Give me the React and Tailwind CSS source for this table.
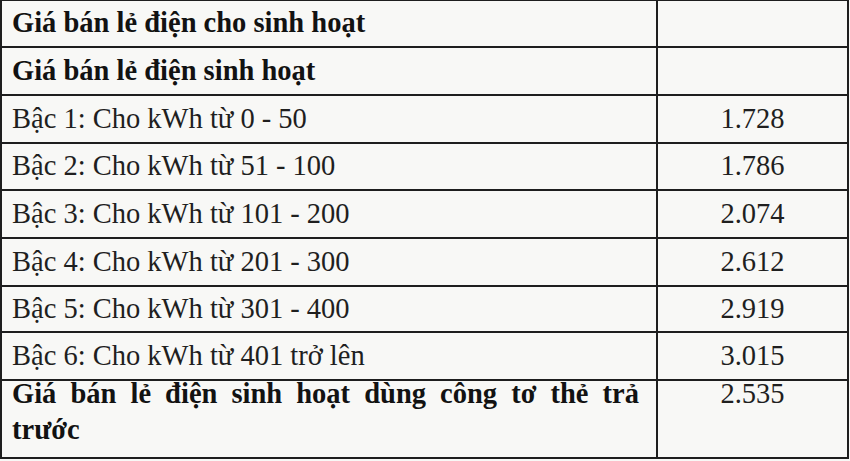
import React from 'react';

const rows = [
  { label: 'Giá bán lẻ điện cho sinh hoạt', value: '', bold: true, h: 'h-[47px]' },
  { label: 'Giá bán lẻ điện sinh hoạt', value: '', bold: true, h: 'h-[48px]' },
  { label: 'Bậc 1: Cho kWh từ 0 - 50', value: '1.728', h: 'h-[48px]' },
  { label: 'Bậc 2: Cho kWh từ 51 - 100', value: '1.786', h: 'h-[47px]' },
  { label: 'Bậc 3: Cho kWh từ 101 - 200', value: '2.074', h: 'h-[48px]' },
  { label: 'Bậc 4: Cho kWh từ 201 - 300', value: '2.612', h: 'h-[48px]' },
  { label: 'Bậc 5: Cho kWh từ 301 - 400', value: '2.919', h: 'h-[46px]' },
  { label: 'Bậc 6: Cho kWh từ 401 trở lên', value: '3.015', h: 'h-[48px]' },
];

export default function App() {
  return (
    <div className="w-[850px] h-[461px] overflow-hidden bg-[#f8f8f6] font-['Liberation_Serif','Times_New_Roman',serif] text-[28.5px] text-[#1f1f1f]">
      <table className="table-fixed border-collapse w-[849px] -mt-px">
        <colgroup>
          <col className="w-[656px]" />
          <col />
        </colgroup>
        <tbody>
          {rows.map((r) => (
            <tr key={r.label} className={r.h}>
              <td
                className={`border-2 border-[#1e1e1e] pl-[10px] align-middle leading-none whitespace-nowrap ${
                  r.bold ? 'font-bold text-[#121212]' : ''
                }`}
              >
                {r.label}
              </td>
              <td className="border-2 border-[#1e1e1e] text-center align-middle leading-none">{r.value}</td>
            </tr>
          ))}
          <tr className="h-[78px]">
            <td className="border-2 border-[#1e1e1e] pl-[10px] pr-[17px] align-top leading-[36px] font-bold text-[#121212]">
              <div className="-mt-[5px] text-justify [text-align-last:justify]">Giá bán lẻ điện sinh hoạt dùng công tơ thẻ trả</div>
              <div>trước</div>
            </td>
            <td className="border-2 border-[#1e1e1e] text-center align-top leading-[36px]">
              <div className="-mt-[5px]">2.535</div>
            </td>
          </tr>
        </tbody>
      </table>
    </div>
  );
}
